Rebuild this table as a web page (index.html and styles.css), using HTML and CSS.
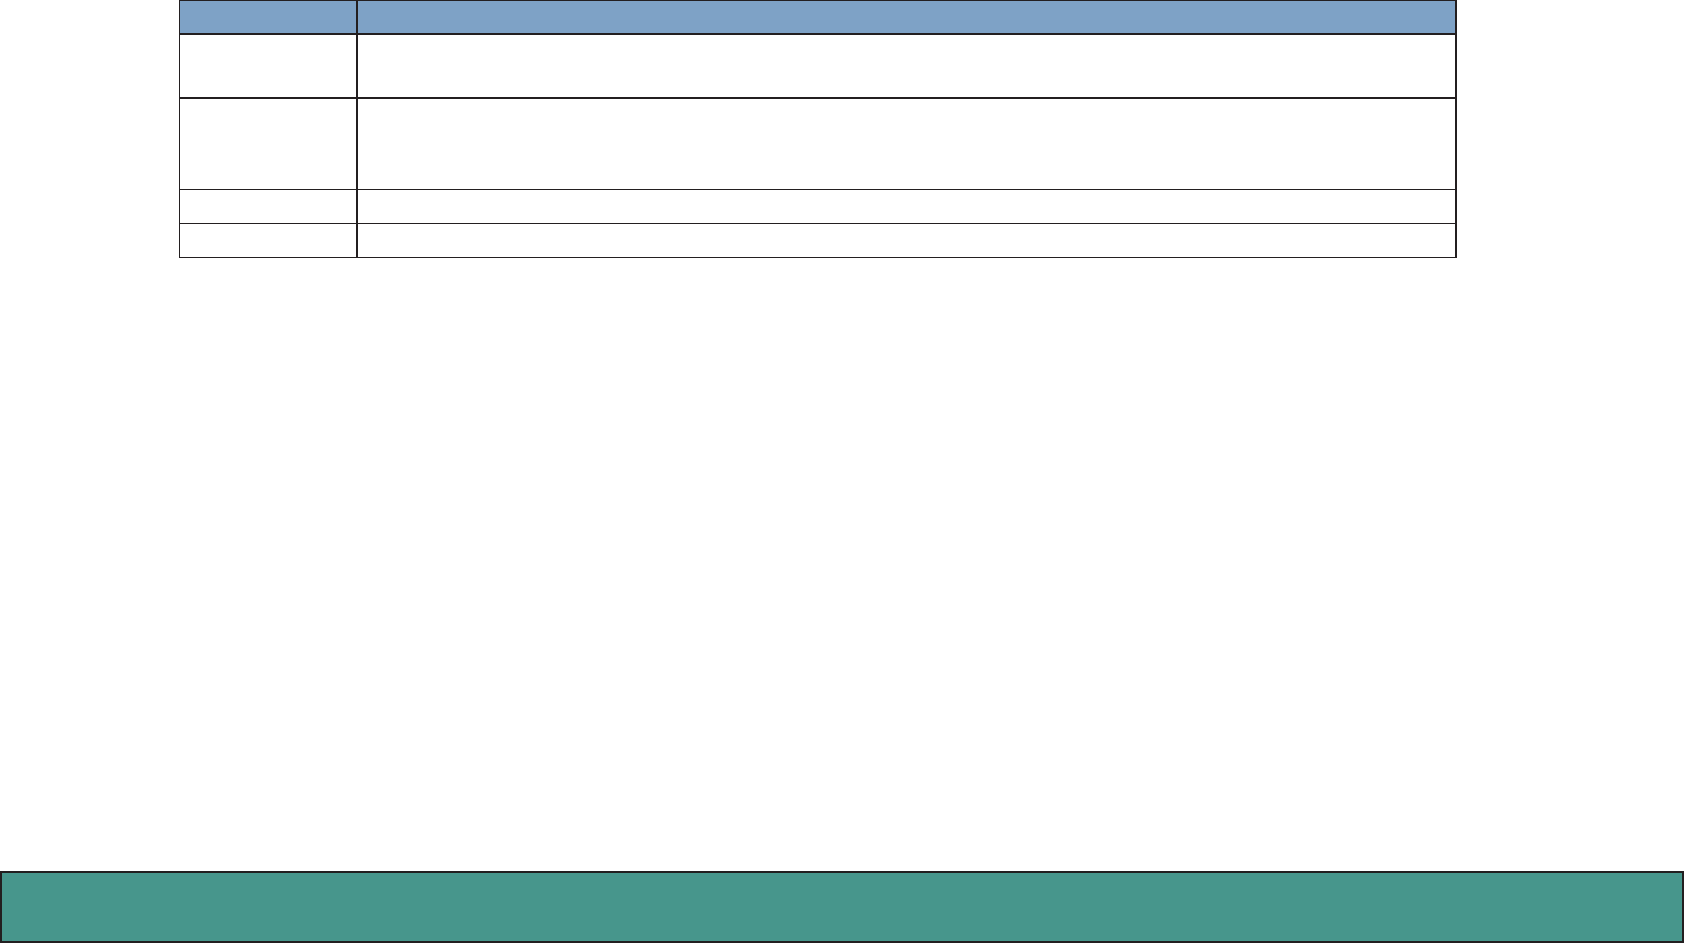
FILE: index.html
```html
<!DOCTYPE html>
<html>
<head>
<meta charset="utf-8">
<link rel="stylesheet" href="styles.css">
</head>
<body>
<div class="page">
  <div class="table">
    <div class="row row-head">
      <div class="cell cell-key"></div>
      <div class="cell cell-val"></div>
    </div>
    <div class="row row-1">
      <div class="cell cell-key"></div>
      <div class="cell cell-val"></div>
    </div>
    <div class="row row-2">
      <div class="cell cell-key"></div>
      <div class="cell cell-val"></div>
    </div>
    <div class="row row-3">
      <div class="cell cell-key"></div>
      <div class="cell cell-val"></div>
    </div>
    <div class="row row-4">
      <div class="cell cell-key"></div>
      <div class="cell cell-val"></div>
    </div>
  </div>
  <div class="footer-bar"></div>
</div>
</body>
</html>
```
FILE: styles.css
```css
html, body {
  margin: 0;
  padding: 0;
  background: #ffffff;
  font-family: "Liberation Sans", Arial, sans-serif;
}
.page {
  height: 943px;
  display: flex;
  flex-direction: column;
  justify-content: space-between;
  overflow: hidden;
}
.table {
  margin-left: 179px;
  width: 1278px;
  box-sizing: border-box;
  border-top: 1px solid #231f20;
  border-left: 1px solid #231f20;
  border-right: 2px solid #231f20;
  display: flex;
  flex-direction: column;
}
.row {
  display: flex;
  border-bottom: 1px solid #231f20;
}
.cell-key {
  width: 176px;
  border-right: 2px solid #231f20;
}
.cell-val {
  flex: 1;
}
.row-head {
  height: 32px;
  background: #7ea2c6;
  border-bottom-width: 2px;
}
.row-1 {
  height: 62px;
  border-bottom-width: 2px;
}
.row-2 {
  height: 90px;
}
.row-3 {
  height: 33px;
}
.row-4 {
  height: 33px;
}
.footer-bar {
  height: 72px;
  box-sizing: border-box;
  background: #47968c;
  border: 2px solid #231f20;
}
```
